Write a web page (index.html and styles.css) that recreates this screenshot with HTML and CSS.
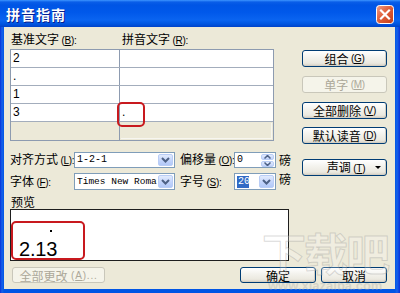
FILE: index.html
```html
<!DOCTYPE html>
<html lang="zh-CN">
<head>
<meta charset="utf-8">
<title>拼音指南</title>
<link rel="stylesheet" href="styles.css">
</head>
<body>
<div class="window">
  <div class="titlebar">
    <span class="title">拼音指南</span>
    <span class="close">
      <svg width="18" height="19" viewBox="0 0 18 19">
        <defs>
          <linearGradient id="cg" x1="0" y1="0" x2="1" y2="1">
            <stop offset="0" stop-color="#f0a08a"/>
            <stop offset="0.45" stop-color="#e0603c"/>
            <stop offset="1" stop-color="#c43c16"/>
          </linearGradient>
        </defs>
        <rect x="0.5" y="0.5" width="17" height="18" rx="3" fill="url(#cg)" stroke="#ffffff"/>
        <path d="M5 5.5 L13 13.5 M13 5.5 L5 13.5" stroke="#ffffff" stroke-width="2.2" stroke-linecap="square"/>
      </svg>
    </span>
  </div>
  <div class="client">
    <div class="main">
      <div class="left">
        <div class="labels">
          <span class="lab1">基准文字<span class="mn"> (<u>B</u>):</span></span>
          <span class="lab2">拼音文字<span class="mn"> (<u>R</u>):</span></span>
        </div>
        <div class="table">
          <div class="row"><div class="cell c1">2</div><div class="cell c2"></div></div>
          <div class="row"><div class="cell c1">.</div><div class="cell c2"></div></div>
          <div class="row"><div class="cell c1">1</div><div class="cell c2"></div></div>
          <div class="row"><div class="cell c1">3</div><div class="cell c2">.</div></div>
          <div class="row last"><div class="cell c1"></div><div class="cell c2"><div class="inner"></div></div></div>
          <div class="mark mark-cell"></div>
        </div>
        <div class="options">
          <span class="olabel">对齐方式<span class="mn"> (<u>L</u>):</span></span>
          <div class="combo"><span class="ctext">1-2-1</span><span class="arrow"><svg width="9" height="6" viewBox="0 0 9 6"><path d="M1 1 L4.5 4.5 L8 1" fill="none" stroke="#4d6185" stroke-width="2"/></svg></span></div>
          <span class="olabel pad">偏移量<span class="mn"> (<u>O</u>):</span></span>
          <div class="combo small"><span class="ctext">0</span><span class="spin"><span class="sbtn"><svg width="7" height="4" viewBox="0 0 7 4"><path d="M0.5 3.5 L3.5 0.5 L6.5 3.5" fill="none" stroke="#4d6185" stroke-width="1.5"/></svg></span><span class="sbtn"><svg width="7" height="4" viewBox="0 0 7 4"><path d="M0.5 0.5 L3.5 3.5 L6.5 0.5" fill="none" stroke="#4d6185" stroke-width="1.5"/></svg></span></span></div>
          <span class="unit">磅</span>

          <span class="olabel">字体<span class="mn"> (<u>F</u>):</span></span>
          <div class="combo"><span class="ctext serif">Times New Roman</span><span class="arrow"><svg width="9" height="6" viewBox="0 0 9 6"><path d="M1 1 L4.5 4.5 L8 1" fill="none" stroke="#4d6185" stroke-width="2"/></svg></span></div>
          <span class="olabel pad">字号<span class="mn"> (<u>S</u>):</span></span>
          <div class="combo small"><span class="ctext"><span class="sel">20</span></span><span class="arrow"><svg width="9" height="6" viewBox="0 0 9 6"><path d="M1 1 L4.5 4.5 L8 1" fill="none" stroke="#4d6185" stroke-width="2"/></svg></span></div>
          <span class="unit up">磅</span>
        </div>
        <div class="preview-label">预览</div>
        <div class="preview">
          <div class="pinyin"><span class="dot"></span></div>
          <div class="base">2.13</div>
          <div class="mark mark-preview"></div>
        </div>
      </div>
      <div class="buttons">
        <button class="btn b1">组合<span class="mn"> (<u>G</u>)</span></button>
        <button class="btn b2 disabled">单字<span class="mn"> (<u>M</u>)</span></button>
        <button class="btn b3">全部删除<span class="mn"> (<u>V</u>)</span></button>
        <button class="btn b4">默认读音<span class="mn"> (<u>D</u>)</span></button>
        <button class="btn b5"><span class="tone">声调<span class="mn"> (<u>T</u>)</span></span><span class="tri"></span></button>
      </div>
    </div>
    <div class="bottom">
      <button class="btn disabled all">全部更改<span class="mn wide"> (<u>A</u>)...</span></button>
      <button class="btn ok">确定</button>
      <button class="btn cancel">取消</button>
    </div>
  </div>
  <div class="watermark">下载吧</div>
  <div class="watermark-url">www.xiazaiba.com</div>
</div>
</body>
</html>
```

FILE: styles.css
```css
html, body {
  margin: 0;
  padding: 0;
}
body {
  width: 400px;
  height: 293px;
  overflow: hidden;
  font-family: "Noto Sans CJK SC", "Liberation Sans", sans-serif;
  font-size: 12px;
  color: #000;
}
u { text-decoration: underline; }

.mn {
  font-family: "Liberation Sans", sans-serif;
  font-size: 10px;
  letter-spacing: -0.3px;
  white-space: pre;
}
.mn.wide { letter-spacing: 0.8px; }

.window {
  position: relative;
  width: 400px;
  height: 293px;
  display: flex;
  flex-direction: column;
  background: linear-gradient(to right, #0831d9 0px, #1662ea 2px, #0055e5 4px, #0055e5 395px, #1662ea 397px, #0831d9 400px);
  overflow: hidden;
}

.titlebar {
  height: 27px;
  flex: none;
  display: flex;
  align-items: center;
  justify-content: space-between;
  padding: 0 6px 0 6px;
  background: linear-gradient(to bottom, #3d95ff 0px, #0a5ee8 2px, #0055e5 5px, #0058ea 12px, #0a64f0 20px, #0055e0 24px, #0042c8 27px);
}
.title {
  color: #fff;
  font-weight: bold;
  font-size: 14px;
  letter-spacing: 1px;
  line-height: 16px;
  text-shadow: 1px 1px 0 #0a1e8c;
  margin-top: 1px;
}
.close {
  display: flex;
  width: 18px;
  height: 19px;
  margin-top: 1px;
}

.client {
  flex: 1;
  margin: 0 5px 4px 4px;
  background: #ece9d8;
  padding: 4px 8px 0 6px;
  display: flex;
  flex-direction: column;
}

.main {
  display: flex;
}
.left {
  width: 282px;
  display: flex;
  flex-direction: column;
}

.labels {
  height: 15px;
  line-height: 15px;
  margin-bottom: 3px;
  display: flex;
}
.lab1 { width: 111px; padding-left: 1px; }

.table {
  position: relative;
  width: 262px;
  border: 1px solid #8d9bb0;
  background: #fff;
  font-family: "Liberation Sans", sans-serif;
  font-size: 12px;
}
.row {
  display: flex;
  height: 17px;
  border-bottom: 1px solid #a3adbc;
}
.row.last {
  height: 18px;
  border-bottom: none;
  background: #ece9d8;
}
.cell {
  line-height: 17px;
  padding-left: 2px;
}
.c1 {
  width: 106px;
  border-right: 1px solid #8d9bb0;
}
.c2 {
  flex: 1;
}
.row.last .c2 {
  padding: 0;
  display: flex;
}
.row.last .inner {
  flex: 1;
  margin: 1px;
  border-right: 1px solid #f7f6f0;
  border-bottom: 1px solid #f7f6f0;
}

.mark {
  position: absolute;
  border: 2px solid #c8191e;
  border-radius: 5px;
  box-sizing: border-box;
}
.mark-cell {
  left: 106px;
  top: 52px;
  width: 28px;
  height: 25px;
}

.options {
  margin-top: 11px;
  display: grid;
  grid-template-columns: 64px 101px 59px 42px auto;
  grid-template-rows: 16px 17px;
  row-gap: 5px;
  align-items: center;
}
.olabel {
  line-height: 16px;
  white-space: nowrap;
}
.olabel.pad { padding-left: 5px; }
.unit { padding-left: 3px; line-height: 16px; }
.unit.up { align-self: start; margin-top: -2px; }

.combo {
  height: 100%;
  box-sizing: border-box;
  border: 1px solid #7f9db9;
  background: #fff;
  display: flex;
  align-items: stretch;
  overflow: hidden;
}
.ctext {
  flex: 1;
  overflow: hidden;
  white-space: nowrap;
  font-family: "Liberation Mono", monospace;
  font-size: 10px;
  line-height: 14px;
  padding-left: 2px;
  display: flex;
  align-items: center;
}
.ctext.serif { font-size: 9.5px; }
.sel {
  background: #316ac5;
  color: #fff;
  padding: 0 0 0 1px;
  line-height: 12px;
  width: 11px;
}
.arrow {
  width: 15px;
  margin: 1px;
  border: 1px solid #b9cdf6;
  border-radius: 2px;
  box-sizing: border-box;
  background: linear-gradient(to bottom, #e2ebfd, #c1d3fb 60%, #b2c8f7);
  display: flex;
  align-items: center;
  justify-content: center;
}
.spin {
  width: 13px;
  margin: 1px;
  display: flex;
  flex-direction: column;
  gap: 1px;
}
.sbtn {
  flex: 1;
  border: 1px solid #b9cdf6;
  border-radius: 2px;
  background: linear-gradient(to bottom, #e2ebfd, #c1d3fb);
  display: flex;
  align-items: center;
  justify-content: center;
}

.preview-label {
  margin-top: 5px;
  height: 14px;
  line-height: 14px;
  padding-left: 1px;
}
.preview {
  position: relative;
  width: 279px;
  height: 52px;
  box-sizing: border-box;
  border: 1px solid #1e1e1e;
  background: #fff;
  padding-left: 8px;
}
.pinyin {
  height: 29px;
  padding-left: 31px;
  box-sizing: border-box;
  padding-top: 20px;
  display: flex;
  align-items: flex-start;
}
.dot {
  width: 2px;
  height: 2px;
  background: #000;
}
.base {
  font-family: "Liberation Sans", sans-serif;
  font-size: 20px;
  line-height: 20px;
  letter-spacing: -0.2px;
}
.mark-preview {
  left: 0px;
  top: 11px;
  width: 74px;
  height: 39px;
}

.buttons {
  margin-left: 10px;
  width: 85px;
  display: flex;
  flex-direction: column;
}
.btn {
  font-family: "Noto Sans CJK SC", sans-serif;
  font-size: 12px;
  line-height: 15px;
  height: 17px;
  padding: 0;
  color: #000;
  border: 1px solid #003c74;
  border-radius: 3px;
  background: linear-gradient(to bottom, #ffffff 0%, #f4f3ee 40%, #ebe9e0 80%, #d6d0c5 100%);
  box-shadow: inset -1px -1px 0 #d4cfc4;
  display: flex;
  align-items: center;
  justify-content: center;
  white-space: nowrap;
}
.btn.disabled {
  color: #aca899;
  border-color: #c9c7ba;
  background: #f5f4ea;
  box-shadow: none;
}
.b1 { margin-top: 19px; }
.b2 { margin-top: 9px; }
.b3 { margin-top: 9px; }
.b4 { margin-top: 8px; }
.b5 { margin-top: 15px; justify-content: flex-start; padding-left: 14px; }
.tone { flex: 1; }
.tri {
  width: 0;
  height: 0;
  border-left: 3px solid transparent;
  border-right: 3px solid transparent;
  border-top: 3px solid #000;
  margin-right: 5px;
}

.bottom {
  margin-top: 6px;
  display: flex;
}
.bottom .btn { height: 16px; }
.all {
  margin-left: 2px;
  width: 93px;
}
.ok {
  margin-left: auto;
  width: 76px;
}
.cancel {
  margin-left: 5px;
  width: 66px;
}

.watermark {
  position: absolute;
  left: 262px;
  top: 222px;
  font-family: "Noto Sans CJK SC", sans-serif;
  font-weight: bold;
  font-size: 44px;
  line-height: 60px;
  letter-spacing: -2px;
  color: rgba(255, 255, 255, 0.22);
  -webkit-text-stroke: 1px rgba(150, 150, 150, 0.35);
  pointer-events: none;
}
.watermark-url {
  position: absolute;
  left: 268px;
  top: 279px;
  font-family: "Liberation Sans", sans-serif;
  font-weight: bold;
  font-size: 13px;
  line-height: 14px;
  color: rgba(170, 170, 170, 0.35);
  pointer-events: none;
}
```
